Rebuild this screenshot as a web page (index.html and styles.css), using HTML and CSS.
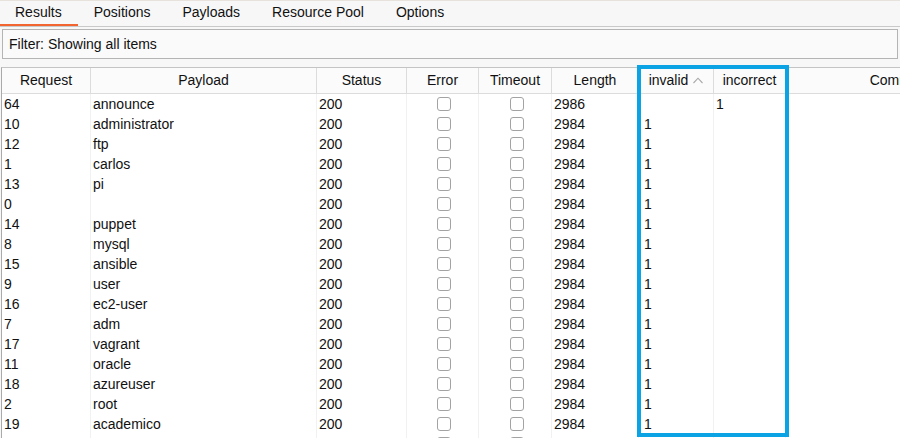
FILE: index.html
```html
<!DOCTYPE html>
<html lang="en">
<head>
<meta charset="utf-8">
<title>Intruder results</title>
<link rel="stylesheet" href="styles.css">
</head>
<body>
<div class="app">
  <div class="tabs">
    <div class="tab active">Results</div>
    <div class="tab">Positions</div>
    <div class="tab">Payloads</div>
    <div class="tab">Resource Pool</div>
    <div class="tab">Options</div>
  </div>
  <div class="filter">Filter: Showing all items</div>
  <div class="grid">
    <div class="row head">
      <div class="c">Request</div>
      <div class="c">Payload</div>
      <div class="c">Status</div>
      <div class="c">Error</div>
      <div class="c">Timeout</div>
      <div class="c">Length</div>
      <div class="c">invalid<svg class="caret" width="10" height="7" viewBox="0 0 10 7"><polyline points="0.5,6 5,1.2 9.5,6" fill="none" stroke="#a8a8a8" stroke-width="1.1"/></svg></div>
      <div class="c">incorrect</div>
      <div class="c">Comment</div>
    </div>
    <div class="row"><div class="c">64</div><div class="c">announce</div><div class="c">200</div><div class="c cb"><span class="box"></span></div><div class="c cb"><span class="box"></span></div><div class="c">2986</div><div class="c inv"></div><div class="c">1</div><div class="c"></div></div>
    <div class="row"><div class="c">10</div><div class="c">administrator</div><div class="c">200</div><div class="c cb"><span class="box"></span></div><div class="c cb"><span class="box"></span></div><div class="c">2984</div><div class="c inv">1</div><div class="c"></div><div class="c"></div></div>
    <div class="row"><div class="c">12</div><div class="c">ftp</div><div class="c">200</div><div class="c cb"><span class="box"></span></div><div class="c cb"><span class="box"></span></div><div class="c">2984</div><div class="c inv">1</div><div class="c"></div><div class="c"></div></div>
    <div class="row"><div class="c">1</div><div class="c">carlos</div><div class="c">200</div><div class="c cb"><span class="box"></span></div><div class="c cb"><span class="box"></span></div><div class="c">2984</div><div class="c inv">1</div><div class="c"></div><div class="c"></div></div>
    <div class="row"><div class="c">13</div><div class="c">pi</div><div class="c">200</div><div class="c cb"><span class="box"></span></div><div class="c cb"><span class="box"></span></div><div class="c">2984</div><div class="c inv">1</div><div class="c"></div><div class="c"></div></div>
    <div class="row"><div class="c">0</div><div class="c"></div><div class="c">200</div><div class="c cb"><span class="box"></span></div><div class="c cb"><span class="box"></span></div><div class="c">2984</div><div class="c inv">1</div><div class="c"></div><div class="c"></div></div>
    <div class="row"><div class="c">14</div><div class="c">puppet</div><div class="c">200</div><div class="c cb"><span class="box"></span></div><div class="c cb"><span class="box"></span></div><div class="c">2984</div><div class="c inv">1</div><div class="c"></div><div class="c"></div></div>
    <div class="row"><div class="c">8</div><div class="c">mysql</div><div class="c">200</div><div class="c cb"><span class="box"></span></div><div class="c cb"><span class="box"></span></div><div class="c">2984</div><div class="c inv">1</div><div class="c"></div><div class="c"></div></div>
    <div class="row"><div class="c">15</div><div class="c">ansible</div><div class="c">200</div><div class="c cb"><span class="box"></span></div><div class="c cb"><span class="box"></span></div><div class="c">2984</div><div class="c inv">1</div><div class="c"></div><div class="c"></div></div>
    <div class="row"><div class="c">9</div><div class="c">user</div><div class="c">200</div><div class="c cb"><span class="box"></span></div><div class="c cb"><span class="box"></span></div><div class="c">2984</div><div class="c inv">1</div><div class="c"></div><div class="c"></div></div>
    <div class="row"><div class="c">16</div><div class="c">ec2-user</div><div class="c">200</div><div class="c cb"><span class="box"></span></div><div class="c cb"><span class="box"></span></div><div class="c">2984</div><div class="c inv">1</div><div class="c"></div><div class="c"></div></div>
    <div class="row"><div class="c">7</div><div class="c">adm</div><div class="c">200</div><div class="c cb"><span class="box"></span></div><div class="c cb"><span class="box"></span></div><div class="c">2984</div><div class="c inv">1</div><div class="c"></div><div class="c"></div></div>
    <div class="row"><div class="c">17</div><div class="c">vagrant</div><div class="c">200</div><div class="c cb"><span class="box"></span></div><div class="c cb"><span class="box"></span></div><div class="c">2984</div><div class="c inv">1</div><div class="c"></div><div class="c"></div></div>
    <div class="row"><div class="c">11</div><div class="c">oracle</div><div class="c">200</div><div class="c cb"><span class="box"></span></div><div class="c cb"><span class="box"></span></div><div class="c">2984</div><div class="c inv">1</div><div class="c"></div><div class="c"></div></div>
    <div class="row"><div class="c">18</div><div class="c">azureuser</div><div class="c">200</div><div class="c cb"><span class="box"></span></div><div class="c cb"><span class="box"></span></div><div class="c">2984</div><div class="c inv">1</div><div class="c"></div><div class="c"></div></div>
    <div class="row"><div class="c">2</div><div class="c">root</div><div class="c">200</div><div class="c cb"><span class="box"></span></div><div class="c cb"><span class="box"></span></div><div class="c">2984</div><div class="c inv">1</div><div class="c"></div><div class="c"></div></div>
    <div class="row"><div class="c">19</div><div class="c">academico</div><div class="c">200</div><div class="c cb"><span class="box"></span></div><div class="c cb"><span class="box"></span></div><div class="c">2984</div><div class="c inv">1</div><div class="c"></div><div class="c"></div></div>
    <div class="row"><div class="c"></div><div class="c"></div><div class="c"></div><div class="c cb"><span class="box"></span></div><div class="c cb"><span class="box"></span></div><div class="c"></div><div class="c inv"></div><div class="c"></div><div class="c"></div></div>
  </div>
  <div class="highlight"></div>
</div>
</body>
</html>
```

FILE: styles.css
```css
html, body {
  margin: 0;
  padding: 0;
  background: #ffffff;
}

.app {
  position: relative;
  width: 900px;
  height: 438px;
  overflow: hidden;
  background: #f7f7f7;
  font-family: "Liberation Sans", Arial, sans-serif;
  font-size: 14px;
  color: #111;
}

.tabs {
  display: flex;
  height: 27px;
  box-sizing: border-box;
  border-top: 1px solid #e8e2dc;
  border-bottom: 1px solid #c9c9c9;
  padding-left: 0;
  margin-left: -1px;
}

.tab {
  height: 25px;
  box-sizing: border-box;
  padding: 0 16px;
  line-height: 23px;
  border-bottom: 2px solid transparent;
}

.tab.active {
  border-bottom-color: #f26430;
}

.filter {
  margin: 2px 2px 0 2px;
  height: 30px;
  box-sizing: border-box;
  border: 1px solid #b4b4b4;
  background: #fafafa;
  padding-left: 6px;
  line-height: 28px;
}

.grid {
  margin: 8px 0 0 1px;
  border-top: 1px solid #c4c4c4;
  border-left: 1px solid #aaaaaa;
  background: #ffffff;
  height: 400px;
}

.row {
  display: grid;
  grid-template-columns: 89px 226px 90px 72px 73px 87px 75px 72px 229px;
  height: 20px;
}

.row .c {
  box-sizing: border-box;
  border-right: 1px solid #f1f1f1;
  padding-left: 2px;
  line-height: 20px;
  white-space: nowrap;
  overflow: hidden;
}

.row.head {
  height: 26px;
  background: #fbfbfb;
  border-bottom: 1px solid #dcdcdc;
  box-sizing: border-box;
}

.row.head .c {
  border-right-color: #dcdcdc;
  padding-left: 0;
  line-height: 25px;
  display: flex;
  align-items: center;
  justify-content: center;
}

.caret {
  margin-left: 5px;
  margin-top: -1px;
}

.row .inv {
  padding-left: 5px;
}

.row .cb {
  display: flex;
  align-items: center;
  justify-content: center;
  padding-left: 3px;
}

.box {
  width: 14px;
  height: 14px;
  box-sizing: border-box;
  border: 1px solid #a3a3a3;
  border-radius: 3px;
  background: #ffffff;
}

.highlight {
  position: absolute;
  left: 637px;
  top: 65px;
  width: 152px;
  height: 372px;
  box-sizing: border-box;
  border: 4px solid #0ba3e4;
  pointer-events: none;
}
```
